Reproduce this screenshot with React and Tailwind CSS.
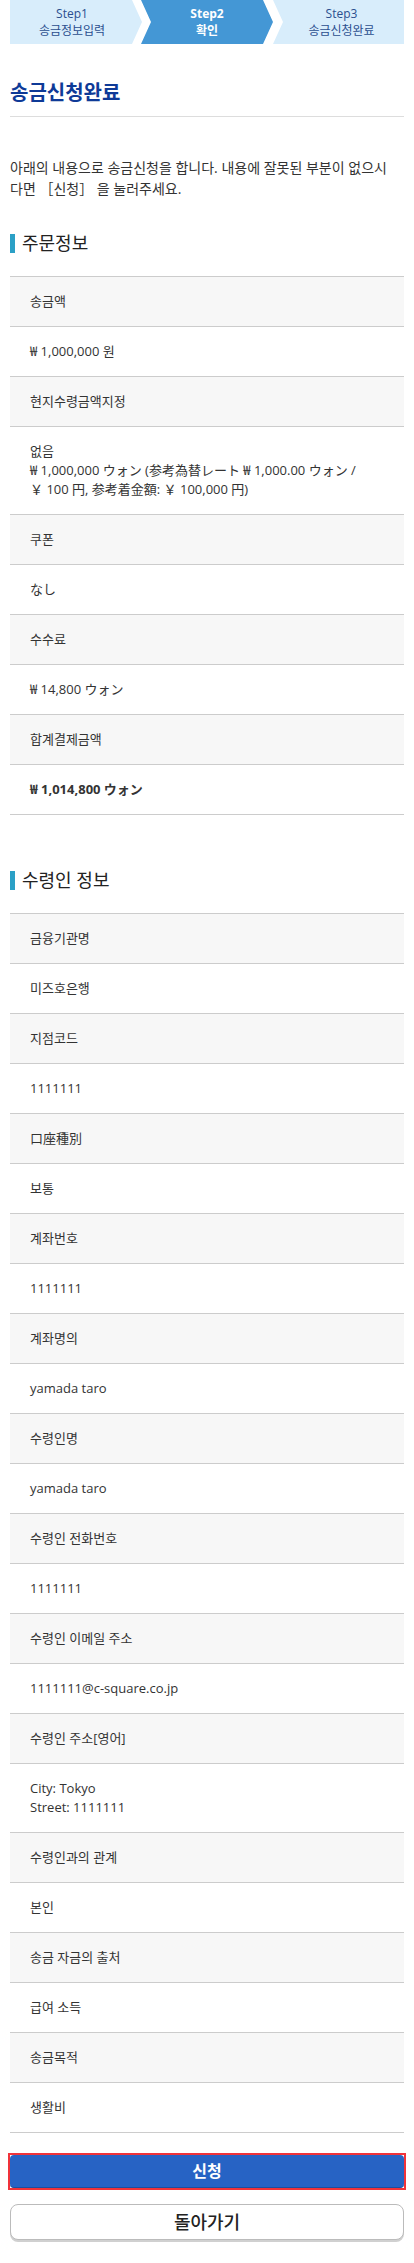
const orderRows = [
  ['송금액', '₩ 1,000,000 원'],
  ['현지수령금액지정', 'multi'],
  ['쿠폰', 'なし'],
  ['수수료', '₩ 14,800 ウォン'],
  ['합계결제금액', 'bold'],
];

const payeeRows = [
  ['금융기관명', '미즈호은행'],
  ['지점코드', '1111111'],
  ['口座種別', '보통'],
  ['계좌번호', '1111111'],
  ['계좌명의', 'yamada taro'],
  ['수령인명', 'yamada taro'],
  ['수령인 전화번호', '1111111'],
  ['수령인 이메일 주소', '1111111@c-square.co.jp'],
  ['수령인 주소[영어]', 'address'],
  ['수령인과의 관계', '본인'],
  ['송금 자금의 출처', '급여 소득'],
  ['송금목적', '생활비'],
];

function Value({ v }) {
  if (v === 'multi') {
    return (
      <>
        없음
        <br />₩ 1,000,000 ウォン (参考為替レート ₩ 1,000.00 ウォン /
        <br />￥ 100 円, 参考着金額: ￥ 100,000 円)
      </>
    );
  }
  if (v === 'bold') return <span className="font-bold">₩ 1,014,800 ウォン</span>;
  if (v === 'address') {
    return (
      <>
        City: Tokyo
        <br />
        Street: 1111111
      </>
    );
  }
  return v;
}

function InfoTable({ rows }) {
  return (
    <div className="border-t border-[#cccccc]">
      {rows.map(([label, value]) => (
        <div key={label}>
          <div className="bg-[#f7f7f7] px-5 py-[15px] leading-[19px] border-b border-[#cccccc]">{label}</div>
          <div className="bg-white px-5 py-[15px] leading-[19px] border-b border-[#cccccc]">
            <Value v={value} />
          </div>
        </div>
      ))}
    </div>
  );
}

function SectionTitle({ children, className }) {
  return (
    <h3 className={`flex items-center gap-[7px] text-[18px] leading-[24px] text-[#222] ${className}`}>
      <span className="w-[5px] h-[19px] bg-[#2ba0c6]" />
      {children}
    </h3>
  );
}

export default function App() {
  return (
    <div className="min-h-[2263px] bg-white px-[10px] pb-[25px] text-[13px] text-[#333] font-['Open_Sans','Noto_Sans_CJK_KR',sans-serif]">
      <div className="flex h-[44px] text-[12px] leading-[17px]">
        <div className="w-[132px] bg-[#d8edfb] text-[#2b4f8f] flex flex-col items-center justify-center pr-[8px] [clip-path:polygon(0_0,calc(100%-10px)_0,100%_50%,calc(100%-10px)_100%,0_100%)]">
          <span>Step1</span>
          <span>송금정보입력</span>
        </div>
        <div className="w-[132px] -ml-[1px] bg-[#4497d5] text-white font-bold flex flex-col items-center justify-center [clip-path:polygon(0_0,calc(100%-10px)_0,100%_50%,calc(100%-10px)_100%,0_100%,10px_50%)]">
          <span>Step2</span>
          <span>확인</span>
        </div>
        <div className="flex-1 bg-[#d8edfb] text-[#2b4f8f] flex flex-col items-center justify-center pl-[6px] [clip-path:polygon(0_0,100%_0,100%_100%,0_100%,10px_50%)]">
          <span>Step3</span>
          <span>송금신청완료</span>
        </div>
      </div>

      <h2 className="mt-[35px] pb-[9px] border-b border-[#dddddd] text-[20px] leading-[28px] font-bold text-[#0e3a97]">
        송금신청완료
      </h2>

      <p className="mt-[40px] text-[14px] leading-[21px]">
        아래의 내용으로 송금신청을 합니다. 내용에 잘못된 부분이 없으시
        <br />
        다면 ［신청］ 을 눌러주세요.
      </p>

      <SectionTitle className="mt-[32px]">주문정보</SectionTitle>
      <div className="mt-[21px]">
        <InfoTable rows={orderRows} />
      </div>

      <SectionTitle className="mt-[53px]">수령인 정보</SectionTitle>
      <div className="mt-[21px]">
        <InfoTable rows={payeeRows} />
      </div>

      <div className="mt-[20px] -mx-[2px] border-2 border-[#f0333a]">
        <button className="w-full h-[33px] rounded-[4px] bg-[#2763c4] border-b border-[#1d4f9e] text-white text-[16px] font-bold">
          신청
        </button>
      </div>
      <button className="mt-[14px] w-full h-[36px] rounded-[8px] bg-white border border-[#bbbbbb] shadow-[0_2px_0_#d0d0d0] text-[#222] text-[18px] font-medium">
        돌아가기
      </button>
    </div>
  );
}
